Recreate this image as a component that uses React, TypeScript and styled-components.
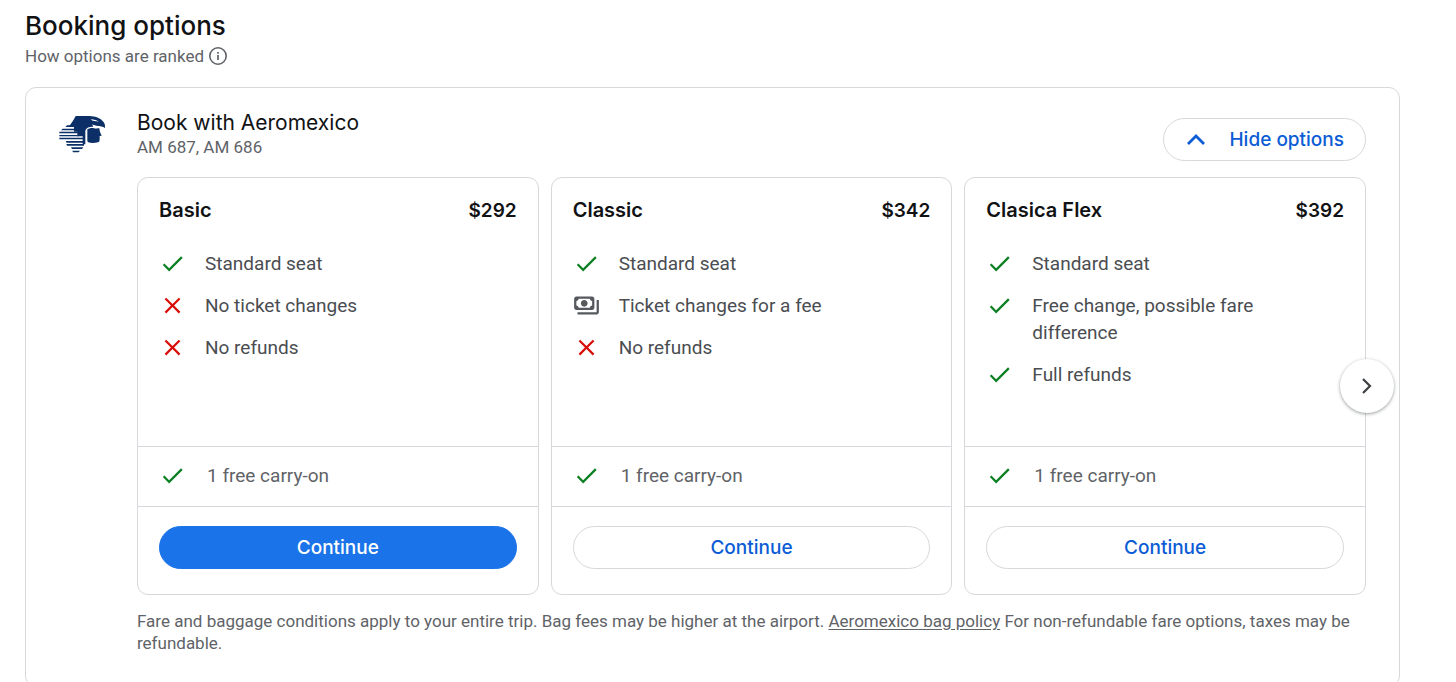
import React from "react";
import styled, { createGlobalStyle } from "styled-components";

const display = `Inter, "Liberation Sans", sans-serif`;
const line = "#d6d8db";
const muted = "#5f6368";
const blue = "#1a73e8";

const GlobalStyle = createGlobalStyle`
  *, *::before, *::after { box-sizing: border-box; }
  body {
    margin: 0;
    background: #fff;
    color: #111214;
    font-family: Roboto, "Liberation Sans", sans-serif;
  }
  h1, h2, h3, p, ul { margin: 0; padding: 0; }
  button { font-family: inherit; cursor: pointer; }
`;

const Page = styled.main`
  padding: 8px 56px 0 25px;
`;

const Title = styled.h1`
  font: 500 26px/36px ${display};
`;

const Ranking = styled.div`
  display: flex;
  align-items: center;
  gap: 4px;
  height: 24px;
  margin-bottom: 19px;
  color: ${muted};
  font-size: 17px;
`;

const InfoButton = styled.button`
  display: flex;
  padding: 0;
  border: 0;
  background: none;
  color: ${muted};
`;

const Provider = styled.section`
  padding: 22px 33px 32px 111px;
  border: 1px solid ${line};
  border-radius: 11px;
`;

const ProviderHeader = styled.header`
  display: flex;
  align-items: flex-start;
  margin-left: -79px;
  margin-bottom: 16px;
`;

const LogoBox = styled.div`
  display: flex;
  flex: none;
  width: 79px;
  padding-top: 5px;
`;

const ProviderText = styled.div`
  flex: 1;
`;

const ProviderName = styled.h2`
  font: 400 21px/26px ${display};
`;

const Flights = styled.p`
  color: ${muted};
  font-size: 17px;
  line-height: 22px;
`;

const PillButton = styled.button<{ $primary?: boolean }>`
  display: flex;
  align-items: center;
  justify-content: center;
  gap: 22px;
  height: 43px;
  padding: 0 21px;
  border: 1px solid ${(p) => (p.$primary ? blue : line)};
  border-radius: 22px;
  background: ${(p) => (p.$primary ? blue : "#fff")};
  color: ${(p) => (p.$primary ? "#fff" : "#0b5cd5")};
  font: 500 19px/24px ${display};
`;

const ToggleButton = styled(PillButton)`
  margin-top: 8px;
`;

const Carousel = styled.div`
  position: relative;
  display: grid;
  grid-template-columns: repeat(3, 1fr);
  gap: 12px;
`;

const Fare = styled.article`
  display: flex;
  flex-direction: column;
  border: 1px solid ${line};
  border-radius: 11px;
`;

const FareHeader = styled.div`
  display: flex;
  justify-content: space-between;
  padding: 19px 21px 0;
  font: 600 20px/27px ${display};
`;

const FareName = styled.h3`
  font: inherit;
`;

const Price = styled.span`
  font-size: 19px;
`;

const Conditions = styled.ul`
  display: flex;
  flex: 1;
  flex-direction: column;
  gap: 15px;
  min-height: 222px;
  padding: 26px 52px 58px 21px;
  list-style: none;
`;

const Condition = styled.li`
  display: flex;
  gap: 19px;
  color: #4a4d51;
  font-size: 19px;
  line-height: 27px;

  svg { flex: none; }
`;

const Baggage = styled.div`
  display: flex;
  align-items: center;
  gap: 21px;
  height: 61px;
  padding: 0 21px 2px;
  border: solid ${line};
  border-width: 1px 0;
  color: ${muted};
  font-size: 19px;
  line-height: 27px;
`;

const FareAction = styled.div`
  display: grid;
  padding: 19px 21px 25px;
`;

const NextButton = styled.button`
  position: absolute;
  top: 50%;
  right: -28px;
  display: flex;
  align-items: center;
  justify-content: center;
  width: 54px;
  height: 54px;
  margin-top: -27px;
  padding: 0;
  border: 0;
  border-radius: 50%;
  background: #fff;
  box-shadow: 0 1px 3px rgba(60, 64, 67, 0.4), 0 1px 4px rgba(60, 64, 67, 0.15);
  color: #3c4043;
`;

const Notice = styled.p`
  margin-top: 15px;
  color: ${muted};
  font-size: 17px;
  line-height: 22px;

  a { color: inherit; text-underline-offset: 2px; }
`;

type Mark = "yes" | "no" | "fee";

const marks: Record<Mark, { color: string; d: string }> = {
  yes: {
    color: "#0d8024",
    d: "M9 16.17 4.83 12l-1.42 1.41L9 19 21 7l-1.41-1.41z",
  },
  no: {
    color: "#d90d08",
    d: "M19 6.41 17.59 5 12 10.59 6.41 5 5 6.41 10.59 12 5 17.59 6.41 19 12 13.41 17.59 19 19 17.59 13.41 12z",
  },
  fee: {
    color: "#55595e",
    d: "M19 14V6c0-1.1-.9-2-2-2H3c-1.1 0-2 .9-2 2v8c0 1.1.9 2 2 2h14c1.1 0 2-.9 2-2zm-2-2c-1.1 0-2 .9-2 2H5c0-1.1-.9-2-2-2V8c1.1 0 2-.9 2-2h10c0 1.1.9 2 2 2v4zm-7-5c-1.66 0-3 1.34-3 3s1.34 3 3 3 3-1.34 3-3-1.34-3-3-3zm13 0v11c0 1.1-.9 2-2 2H4v-2h17V7h2z",
  },
};

const MarkIcon = ({ mark }: { mark: Mark }) => (
  <svg width="27" height="27" viewBox="0 0 24 24" fill={marks[mark].color} aria-hidden="true">
    <path d={marks[mark].d} />
  </svg>
);

const InfoIcon = () => (
  <svg width="20" height="20" viewBox="0 0 20 20" fill="none" stroke="currentColor" aria-hidden="true">
    <circle cx="10" cy="10" r="8.2" strokeWidth="1.6" />
    <path d="M10 9v5M10 6v1.7" strokeWidth="1.7" />
  </svg>
);

const AeromexicoLogo = () => (
  <svg width="48" height="38" viewBox="0 0 144 114" fill="#0b2f66" role="img" aria-label="Aeromexico">
    <path d="M53 3h43c14 1 29 5 37 14 7 6 9 13 8 22-6-5-14-6-26-7-6-1-10-2-13-4l4 7c-14 0-23 4-24 14v39h-8V64H58V50H48V36H31c8-8 14-18 22-33z" />
    <path d="M88 43c8-4 16-5 20-3 5 2 10-2 16 0 1 8 2 12 7 22l-6 1c0 10 1 18-5 19-9 2-21 3-29 0-2-1-3-3-3-7z" />
    <path d="M98 13c10 0 19 3 25 7-10-1-20-1-25-7z" fill="#fff" />
    <path d="M27 31h26v5H22zM14 41h40v5H9zM4 50h58v5H4zM4 60h58v4H4zM4 68h74v5H4zM23 78h55v5H26zM25 87h53v5H27zM39 97h37l-4 5H42zM43 107h23l-4 5H45z" />
  </svg>
);

interface FareOption {
  name: string;
  price: string;
  conditions: [Mark, string][];
}

const fares: FareOption[] = [
  {
    name: "Basic",
    price: "$292",
    conditions: [["yes", "Standard seat"], ["no", "No ticket changes"], ["no", "No refunds"]],
  },
  {
    name: "Classic",
    price: "$342",
    conditions: [["yes", "Standard seat"], ["fee", "Ticket changes for a fee"], ["no", "No refunds"]],
  },
  {
    name: "Clasica Flex",
    price: "$392",
    conditions: [
      ["yes", "Standard seat"],
      ["yes", "Free change, possible fare difference"],
      ["yes", "Full refunds"],
    ],
  },
];

export default function App() {
  return (
    <>
      <GlobalStyle />
      <Page>
        <Title>Booking options</Title>
        <Ranking>
          How options are ranked
          <InfoButton type="button" aria-label="About ranking">
            <InfoIcon />
          </InfoButton>
        </Ranking>
        <Provider>
          <ProviderHeader>
            <LogoBox>
              <AeromexicoLogo />
            </LogoBox>
            <ProviderText>
              <ProviderName>Book with Aeromexico</ProviderName>
              <Flights>AM 687, AM 686</Flights>
            </ProviderText>
            <ToggleButton type="button" aria-expanded="true">
              <svg width="22" height="22" viewBox="0 0 22 22" fill="none" stroke="currentColor" strokeWidth="2.8" aria-hidden="true">
                <path d="m3 15 8-8 8 8" />
              </svg>
              Hide options
            </ToggleButton>
          </ProviderHeader>
          <Carousel>
            {fares.map((fare, index) => (
              <Fare key={fare.name}>
                <FareHeader>
                  <FareName>{fare.name}</FareName>
                  <Price>{fare.price}</Price>
                </FareHeader>
                <Conditions>
                  {fare.conditions.map(([mark, text]) => (
                    <Condition key={text}>
                      <MarkIcon mark={mark} />
                      <span>{text}</span>
                    </Condition>
                  ))}
                </Conditions>
                <Baggage>
                  <MarkIcon mark="yes" />
                  1 free carry-on
                </Baggage>
                <FareAction>
                  <PillButton type="button" $primary={index === 0}>
                    Continue
                  </PillButton>
                </FareAction>
              </Fare>
            ))}
            <NextButton type="button" aria-label="Next fares">
              <svg width="24" height="24" viewBox="0 0 24 24" fill="none" stroke="currentColor" strokeWidth="2.2" aria-hidden="true">
                <path d="m8 5 7 7-7 7" />
              </svg>
            </NextButton>
          </Carousel>
          <Notice>
            Fare and baggage conditions apply to your entire trip. Bag fees may be higher at the airport.{" "}
            <a href="#bag-policy">Aeromexico bag policy</a> For non-refundable fare options, taxes may be refundable.
          </Notice>
        </Provider>
      </Page>
    </>
  );
}
